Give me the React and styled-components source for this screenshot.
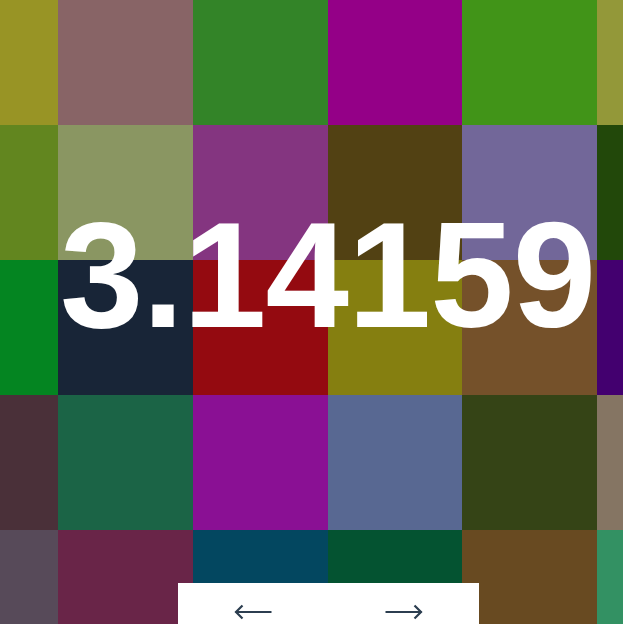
import React from "react";
import styled, { createGlobalStyle } from "styled-components";

const cells = [
  ["#989425", "#886466", "#338428", "#940087", "#419418", "#939839"],
  ["#62861f", "#8a9662", "#843580", "#524113", "#726799", "#22480a"],
  ["#048521", "#182537", "#940a10", "#857f10", "#75512a", "#43006f"],
  ["#4a3039", "#1b6446", "#8a1094", "#586892", "#354416", "#857563"],
  ["#574a59", "#692548", "#034760", "#045331", "#684a21", "#339163"],
];

const Global = createGlobalStyle`
  html, body {
    margin: 0;
    padding: 0;
    overflow: hidden;
    background: #fff;
  }
`;

const Stage = styled.div`
  position: relative;
  width: 623px;
  height: 624px;
  overflow: hidden;
`;

const Board = styled.div`
  display: grid;
  grid-template-columns: repeat(6, 134.75px);
  grid-auto-rows: 135px;
  margin-left: -76.75px;
  margin-top: -10px;
`;

const Cell = styled.div`
  background: ${(p) => p.$color};
`;

const Title = styled.h1`
  position: absolute;
  top: 200px;
  left: 0;
  width: 655px;
  margin: 0;
  text-align: center;
  font-family: "Liberation Sans", Arial, sans-serif;
  font-weight: 700;
  font-size: 150px;
  line-height: 150px;
  letter-spacing: -1px;
  color: #fff;
`;

const Nav = styled.nav`
  position: absolute;
  left: 178px;
  top: 583px;
  width: 301px;
  height: 58px;
  background: #fff;
  display: grid;
  grid-template-columns: 1fr 1fr;
`;

const NavButton = styled.button`
  border: 0;
  background: transparent;
  padding: 0;
  display: flex;
  align-items: center;
  justify-content: center;
  color: #2c3e50;
  cursor: pointer;
`;

function Arrow({ dir }) {
  const flip = dir === "right" ? "scale(-1,1) translate(-38,0)" : undefined;
  return (
    <svg width="38" height="16" viewBox="0 0 38 16">
      <g transform={flip} fill="none" stroke="currentColor" strokeWidth="2.2">
        <path d="M1.5 8H37.5" />
        <path d="M8.5 1.5L2 8L8.5 14.5" strokeLinejoin="miter" />
      </g>
    </svg>
  );
}

export default function App() {
  return (
    <>
      <Global />
      <Stage>
        <Board>
          {cells.flat().map((c, i) => (
            <Cell key={i} $color={c} />
          ))}
        </Board>
        <Title>3.14159</Title>
        <Nav>
          <NavButton aria-label="Previous">
            <Arrow dir="left" />
          </NavButton>
          <NavButton aria-label="Next">
            <Arrow dir="right" />
          </NavButton>
        </Nav>
      </Stage>
    </>
  );
}
